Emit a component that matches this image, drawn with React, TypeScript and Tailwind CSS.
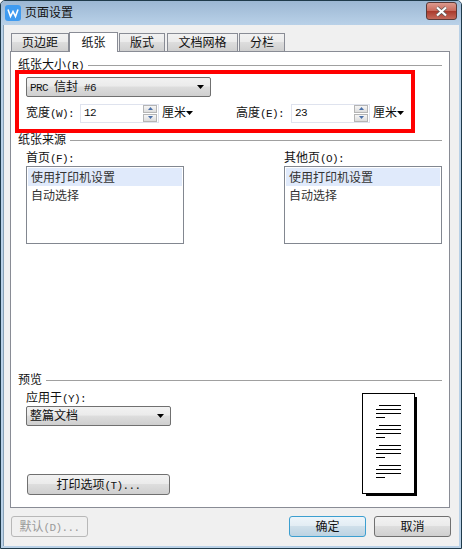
import type { ReactNode } from "react";

const font = "font-['Liberation_Mono','Noto_Sans_CJK_SC',monospace]";

// latin text in the reference is half width, 6px a char
const Lat = ({ children }: { children: ReactNode }) => (
  <span className="text-[11px] tracking-[-0.6px]">{children}</span>
);

const Heading = ({ label }: { label: ReactNode }) => (
  <div className="flex h-[14px] items-center gap-[4px]">
    <span className="pt-[2px] text-[12px] leading-[14px]">{label}</span>
    <div className="h-px flex-1 bg-[#a0a0a0]" />
  </div>
);

const Arrow = () => (
  <svg width="7" height="4" viewBox="0 0 7 4" className="shrink-0">
    <path d="M0 0h7L3.5 4z" fill="#000" />
  </svg>
);

const Select = ({ value, className }: { value: ReactNode; className: string }) => (
  <div
    className={`ml-[8px] flex h-[20px] items-center justify-between rounded-[2px] border border-[#707070] bg-[linear-gradient(#f2f2f2_0%,#ebebeb_45%,#dddddd_50%,#cfcfcf_100%)] pl-[3px] pr-[6px] text-[12px] ${className}`}
  >
    <span className="pt-[2px]">{value}</span>
    <Arrow />
  </div>
);

const Spinner = ({ value }: { value: string }) => (
  <div className="flex h-[19px] w-[79px] items-center justify-between border border-[#dfe3ee] bg-white pl-[3px] pr-[1px]">
    <Lat>{value}</Lat>
    <div className="flex flex-col gap-px">
      <div className="flex h-[8px] w-[14px] items-center justify-center border border-[#b5b5b5] bg-[linear-gradient(#f6f6f6,#dcdcdc)]">
        <svg width="5" height="3" viewBox="0 0 5 3">
          <path d="M2.5 0L5 3H0z" fill="#4a6fa8" />
        </svg>
      </div>
      <div className="flex h-[8px] w-[14px] items-center justify-center border border-[#b5b5b5] bg-[linear-gradient(#f6f6f6,#dcdcdc)]">
        <svg width="5" height="3" viewBox="0 0 5 3">
          <path d="M0 0h5L2.5 3z" fill="#4a6fa8" />
        </svg>
      </div>
    </div>
  </div>
);

const SizeField = ({ label, hint, value, labelClass }: { label: string; hint: string; value: string; labelClass: string }) => (
  <div className="flex items-center">
    <span className={`pt-[2px] text-[12px] ${labelClass}`}>
      {label}
      <Lat>{hint}</Lat>
    </span>
    <Spinner value={value} />
    <span className="ml-[3px] pt-[2px] text-[12px]">厘米</span>
    <Arrow />
  </div>
);

const SourceList = ({ label, hint }: { label: string; hint: string }) => (
  <div className="w-[158px]">
    <div className="h-[14px] pt-px text-[12px] leading-[14px]">
      {label}
      <Lat>{hint}</Lat>
    </div>
    <div className="mt-px h-[78px] border border-[#828790] bg-white p-px text-[12px] text-[#333]">
      <div className="h-[18px] bg-[#e0eafb] pl-[3px] pt-[2px] leading-[18px]">使用打印机设置</div>
      <div className="h-[18px] pl-[3px] pt-[2px] leading-[18px]">自动选择</div>
    </div>
  </div>
);

const Btn = ({
  children,
  className,
}: {
  children: ReactNode;
  className: string;
}) => (
  <div
    className={`flex items-center justify-center rounded-[3px] border pt-[2px] text-[12px] ${className}`}
  >
    {children}
  </div>
);

const tabClass =
  "flex h-[18px] items-center justify-center border border-b-0 border-[#898c95] bg-[linear-gradient(#f2f2f2_0%,#ebebeb_45%,#dddddd_50%,#cfcfcf_100%)] pt-[2px] text-[12px]";

const Paper = () => {
  const groups = [0, 20, 40, 60];
  return (
    <svg width="55" height="103" viewBox="0 0 55 103" className="mr-[25px] mt-[6px]">
      <rect x="4" y="4" width="51" height="99" fill="#000" />
      <rect x="0.5" y="0.5" width="52" height="100" fill="#fff" stroke="#000" />
      {groups.map((g) => (
        <g key={g} fill="#000">
          <rect x="17" y={12 + g} width="22" height="1" />
          <rect x="14" y={16 + g} width="25" height="1" />
          <rect x="14" y={20 + g} width="25" height="1" />
          <rect x="14" y={24 + g} width="9" height="1" />
        </g>
      ))}
    </svg>
  );
};

export default function App() {
  return (
    <div
      className={`${font} flex h-[549px] w-[462px] flex-col overflow-hidden rounded-t-[5px] border border-[#1f3a4a] bg-[#b9d1e7] text-[#111]`}
    >
      <div className="flex h-[24px] shrink-0 items-center bg-[linear-gradient(#9cb7d3,#b9d1e8)] pl-[4px] pr-[4px]">
        <svg width="16" height="16" viewBox="0 0 16 16">
          <rect width="16" height="16" rx="3" fill="#3f9bf0" />
          <path d="M3 4.5L5.5 11.5L8 6.5L10.5 11.5L13 4.5" fill="none" stroke="#fff" strokeWidth="1.6" />
        </svg>
        <span className="ml-[4px] pt-[2px] text-[12px]">页面设置</span>
        <div className="mb-[4px] ml-auto flex h-[18px] w-[31px] items-center justify-center rounded-[3px] border border-[#5a3a38] bg-[linear-gradient(#dc9a8e_0%,#c96a5c_48%,#a93a2c_52%,#c4695a_100%)]">
          <svg width="15" height="11" viewBox="0 0 15 11">
            <path d="M3 1.5L12 9.5M12 1.5L3 9.5" stroke="#5b5b5b" strokeWidth="3.6" />
            <path d="M3 1.5L12 9.5M12 1.5L3 9.5" stroke="#fff" strokeWidth="2.2" />
          </svg>
        </div>
      </div>

      <div className="mx-[2px] mb-[2px] flex flex-1 flex-col border-l border-[#8aa3b8] bg-[#f0f0f0] pl-[6px] pr-[9px] pt-[7px]">
        <div className="relative z-10 ml-px flex h-[19px] items-start">
          <div className={`${tabClass} mt-px w-[58px]`}>页边距</div>
          <div className="flex h-[20px] w-[49px] items-center justify-center border border-b-0 border-[#898c95] bg-white pt-[2px] text-[12px]">
            纸张
          </div>
          <div className={`${tabClass} ml-px mt-px w-[46px]`}>版式</div>
          <div className={`${tabClass} ml-[2px] mt-px w-[71px]`}>文档网格</div>
          <div className={`${tabClass} ml-[1px] mt-px w-[46px]`}>分栏</div>
        </div>

        <div className="relative h-[457px] border border-[#898c95] bg-white px-[7px] pt-[6px]">
          <Heading
            label={
              <>
                纸张大小<Lat>(R)</Lat>
              </>
            }
          />
          <Select
            value={
              <>
                <Lat>PRC </Lat>信封<Lat> #6</Lat>
              </>
            }
            className="mt-[5px] w-[185px]"
          />
          <div className="ml-[8px] mt-[6px] flex gap-[43px]">
            <SizeField label="宽度" hint="(W):" value="12" labelClass="w-[54px]" />
            <SizeField label="高度" hint="(E):" value="23" labelClass="w-[55px]" />
          </div>

          <div className="mt-[10px]">
            <Heading label="纸张来源" />
          </div>
          <div className="ml-[8px] mt-[4px] flex justify-between">
            <SourceList label="首页" hint="(F):" />
            <SourceList label="其他页" hint="(O):" />
          </div>

          <div className="mt-[129px]">
            <Heading label="预览" />
          </div>
          <div className="flex items-start justify-between">
            <div className="mt-[4px]">
              <div className="ml-[8px] h-[14px] pt-px text-[12px] leading-[14px]">
                应用于<Lat>(Y):</Lat>
              </div>
              <Select value="整篇文档" className="mt-px w-[145px]" />
              <Btn className="ml-[9px] mt-[48px] h-[21px] w-[143px] border-[#707070] bg-[linear-gradient(#f2f2f2_0%,#ebebeb_45%,#dddddd_50%,#cfcfcf_100%)]">
                <span>
                  打印选项<Lat>(T)...</Lat>
                </span>
              </Btn>
            </div>
            <Paper />
          </div>

          <div className="pointer-events-none absolute left-[4px] top-[18px] h-[63px] w-[400px] border-[4px] border-[#ff0000]" />
        </div>

        <div className="mt-[8px] flex">
          <Btn className="ml-px h-[21px] w-[77px] border-[#b8b8b8] text-[#9a9a9a]">
            <span>
              默认<Lat>(D)...</Lat>
            </span>
          </Btn>
          <Btn className="ml-auto h-[21px] w-[77px] border-[#3c9fd0] bg-[linear-gradient(#eef5fa_0%,#e3edf4_45%,#cfdfea_50%,#bcd3e2_100%)]">
            确定
          </Btn>
          <Btn className="-mr-px ml-[8px] h-[21px] w-[77px] border-[#707070] bg-[linear-gradient(#f2f2f2_0%,#ebebeb_45%,#dddddd_50%,#cfcfcf_100%)]">
            取消
          </Btn>
        </div>
      </div>
    </div>
  );
}
